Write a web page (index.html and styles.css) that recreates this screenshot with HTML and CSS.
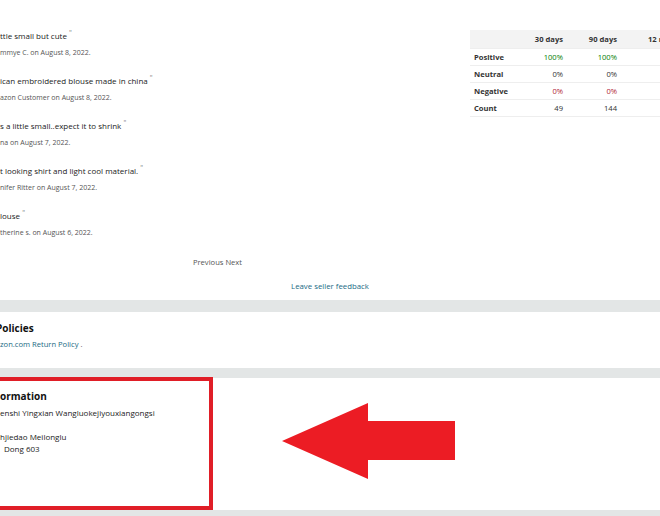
FILE: index.html
```html
<!DOCTYPE html>
<html>
<head>
<meta charset="utf-8">
<link rel="stylesheet" href="styles.css">
</head>
<body>
<div class="page">
  <div class="top">
    <div class="reviews">
      <div class="review">
        <div class="r-title">ttle small but cute <span class="q">"</span></div>
        <div class="r-meta">mmye C. on August 8, 2022.</div>
      </div>
      <div class="review">
        <div class="r-title">ican embroidered blouse made in china <span class="q">"</span></div>
        <div class="r-meta">azon Customer on August 8, 2022.</div>
      </div>
      <div class="review">
        <div class="r-title">s a little small..expect it to shrink <span class="q">"</span></div>
        <div class="r-meta">na on August 7, 2022.</div>
      </div>
      <div class="review">
        <div class="r-title">t looking shirt and light cool material. <span class="q">"</span></div>
        <div class="r-meta">nifer Ritter on August 7, 2022.</div>
      </div>
      <div class="review">
        <div class="r-title">louse <span class="q">"</span></div>
        <div class="r-meta">therine s. on August 6, 2022.</div>
      </div>
      <div class="pager">Previous Next</div>
    </div>
    <table class="stats">
      <thead>
        <tr><th></th><th>30 days</th><th>90 days</th><th class="last">12 months</th></tr>
      </thead>
      <tbody>
        <tr><td class="lbl">Positive</td><td class="pos">100%</td><td class="pos">100%</td><td></td></tr>
        <tr><td class="lbl">Neutral</td><td>0%</td><td>0%</td><td></td></tr>
        <tr><td class="lbl">Negative</td><td class="neg">0%</td><td class="neg">0%</td><td></td></tr>
        <tr><td class="lbl">Count</td><td>49</td><td>144</td><td></td></tr>
      </tbody>
    </table>
  </div>
  <div class="feedback"><a>Leave seller feedback</a></div>
  <div class="band band-a"></div>
  <section class="sec policies">
    <h3>Policies</h3>
    <a class="link">zon.com Return Policy</a> <span class="dot">.</span>
  </section>
  <div class="band band-b"></div>
  <section class="sec info">
    <h3>ormation</h3>
    <div class="line">enshi Yingxian Wangluokejiyouxiangongsi</div>
    <div class="line gap">hjiedao Meilonglu</div>
    <div class="line indent">Dong 603</div>
  </section>
  <div class="band band-c"></div>

  <div class="highlight"></div>
  <svg class="arrow" width="180" height="80" viewBox="0 0 180 80">
    <polygon points="2,39 88,1 88,19 175,19 175,58 88,58 88,77" fill="#ec1c24"/>
  </svg>
</div>
</body>
</html>
```

FILE: styles.css
```css
html, body { margin: 0; padding: 0; }
body {
  width: 660px;
  height: 516px;
  overflow: hidden;
  background: #fff;
  font-family: "Open Sans", "Liberation Sans", sans-serif;
  color: #111;
}
.page { position: relative; width: 660px; height: 516px; overflow: hidden; }

.top { display: flex; height: 278px; }
.reviews { width: 435px; flex: none; padding-top: 29px; }
.review { height: 45px; }
.r-title { font-size: 8px; line-height: 14px; color: #222; white-space: nowrap; }
.q { font-size: 7px; color: #888; vertical-align: top; position: relative; top: -3px; }
.r-meta { font-size: 7px; line-height: 10px; margin-top: 5px; color: #555; white-space: nowrap; }
.pager { text-align: center; font-size: 7.6px; line-height: 10px; color: #555; margin-top: 3px; }

.stats {
  flex: none;
  width: 240px;
  margin-top: 30px;
  margin-left: 35px;
  border-collapse: collapse;
  font-size: 7.6px;
  align-self: flex-start;
  table-layout: fixed;
  white-space: nowrap;
}
.stats th { background: #f3f3f3; height: 18px; padding: 0 5px; text-align: right; font-weight: 700; color: #333; }
.stats th:first-child { width: 34px; }
.stats th:nth-child(2), .stats th:nth-child(3) { width: 44px; }
.stats th.last { text-align: left; padding-left: 26px; }
.stats td { height: 16px; padding: 0 5px; text-align: right; color: #333; border-top: 1px solid #eee; }
.stats td.lbl { text-align: left; font-weight: 700; color: #333; padding-left: 4px; }
.stats td.pos { color: #067d06; }
.stats td.neg { color: #b12736; }
.stats tbody tr:last-child td { border-bottom: 1px solid #eee; }

.feedback { text-align: center; font-size: 7.8px; line-height: 16px; height: 22px; }
.feedback a { color: #1a6a84; }

.band { background: #e3e6e6; }
.band-a { height: 12px; }
.band-b { height: 10px; }
.band-c { height: 6px; }

.sec h3 { margin: 0; font-size: 10px; font-weight: 700; color: #111; line-height: 14px; }
.policies { height: 56px; padding-top: 9px; box-sizing: border-box; font-size: 7.6px; }
.policies h3 { margin: 0 0 4px -4px; }
.policies .link { color: #1a6a84; }
.policies .dot { color: #555; }
.info { height: 132px; padding-top: 11px; box-sizing: border-box; font-size: 8px; color: #222; }
.info h3 { margin-bottom: 4px; }
.info .line { line-height: 12px; }
.info .gap { margin-top: 12px; }
.info .indent { padding-left: 4px; }

.highlight {
  position: absolute;
  left: -4px;
  top: 377px;
  width: 209px;
  height: 125px;
  border: 4px solid #e01e27;
}
.arrow { position: absolute; left: 280px; top: 402px; }
```
